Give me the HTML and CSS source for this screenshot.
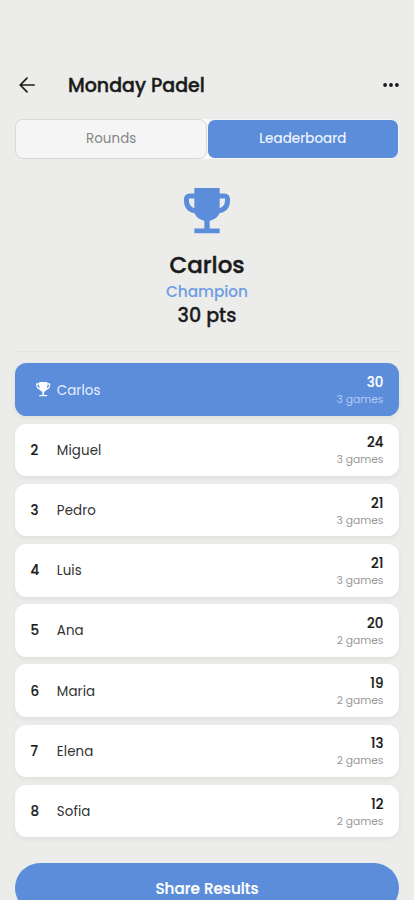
FILE: index.html
```html
<!DOCTYPE html>
<html lang="en">
<head>
<meta charset="utf-8">
<meta name="viewport" content="width=device-width, initial-scale=1">
<title>Monday Padel</title>
<link rel="stylesheet" href="styles.css">
</head>
<body>
<svg class="defs" width="0" height="0" aria-hidden="true">
  <symbol id="trophy" viewBox="0 0 138 136">
    <path fill-rule="evenodd" d="M31 0H107V16H122A16 16 0 0 1 138 32V38C138 58 126 73 107 75C101 87 93 95 77 98V121H107V136H31V121H61V98C45 95 37 87 31 75C12 73 0 58 0 38V32A16 16 0 0 1 16 16H31ZM31 31H15V38C15 49 22 57 31 60ZM107 31H123V38C123 49 116 57 107 60Z"/>
  </symbol>
  <symbol id="trophy-small" viewBox="0 0 43 44">
    <path fill-rule="evenodd" d="M11 0H32Q34 0 34 2V4H41Q43 4 43 6V9C43 17 37 22 31 24C29 27 26 29 24 29V39H31Q34 39 34 41V43H9V41Q9 39 12 39H19V29C17 29 14 27 12 24C6 22 0 17 0 9V6Q0 4 2 4H9V2Q9 0 11 0ZM9 8H4V10C4 14 7 18 11 19C10 16 9 12 9 8ZM34 8C34 12 33 16 32 19C36 18 39 14 39 10V8Z"/>
  </symbol>
</svg>
<header class="header">
  <svg class="back" viewBox="0 0 16 16"><path d="M8 1.2L1.2 8L8 14.8M1.2 8H15.2"/></svg>
  <h1 class="title"><span>Monday Padel</span></h1>
  <svg class="more" viewBox="0 0 16 4"><circle cx="2.1" cy="2" r="1.9"/><circle cx="8" cy="2" r="1.9"/><circle cx="13.9" cy="2" r="1.9"/></svg>
</header>
<nav class="tabs">
  <div class="tab">Rounds</div>
  <div class="tab active">Leaderboard</div>
</nav>
<section class="champion">
  <svg class="cup"><use href="#trophy"/></svg>
  <div class="winner">Carlos</div>
  <div class="label">Champion</div>
  <div class="points">30 pts</div>
</section>
<main class="list">
  <div class="row first"><span class="rank"><svg class="mini"><use href="#trophy-small"/></svg></span><span class="name">Carlos</span><div class="score"><b>30</b><small>3 games</small></div></div>
  <div class="row"><span class="rank">2</span><span class="name">Miguel</span><div class="score"><b>24</b><small>3 games</small></div></div>
  <div class="row"><span class="rank">3</span><span class="name">Pedro</span><div class="score"><b>21</b><small>3 games</small></div></div>
  <div class="row"><span class="rank">4</span><span class="name">Luis</span><div class="score"><b>21</b><small>3 games</small></div></div>
  <div class="row"><span class="rank">5</span><span class="name">Ana</span><div class="score"><b>20</b><small>2 games</small></div></div>
  <div class="row"><span class="rank">6</span><span class="name">Maria</span><div class="score"><b>19</b><small>2 games</small></div></div>
  <div class="row"><span class="rank">7</span><span class="name">Elena</span><div class="score"><b>13</b><small>2 games</small></div></div>
  <div class="row"><span class="rank">8</span><span class="name">Sofia</span><div class="score"><b>12</b><small>2 games</small></div></div>
</main>
<div class="share">Share Results</div>
</body>
</html>
```
FILE: styles.css
```css
* { box-sizing: border-box; }
html { height: 900px; overflow: hidden; }
body {
  margin: 0;
  height: 900px;
  overflow: hidden;
  padding: 65px 15.3px 0;
  background: #ececea;
  color: #1b1b1b;
  font-family: Poppins, Inter, "Open Sans", sans-serif;
}
.defs { position: absolute; }
.header { display: flex; align-items: center; height: 40px; padding: 0 0 0 4px; }
.back { width: 16px; height: 16px; fill: none; stroke: #1b1b1b; stroke-width: 1.7; stroke-linecap: round; stroke-linejoin: round; }
.title { flex: 1; margin: 0 0 0 32.7px; padding-top: 1px; font-size: 19px; line-height: 30px; font-weight: 500; -webkit-text-stroke: .4px; white-space: nowrap; }
.more { width: 16px; height: 4px; fill: #1b1b1b; }
.tabs { display: flex; height: 40px; margin-top: 14px; background: #fafafa; border-radius: 9px; }
.tab { flex: 1; display: flex; align-items: center; justify-content: center; border: 1px solid #d8d8d8; border-radius: 8px; background: #f5f5f5; color: #858585; font-size: 13.4px; letter-spacing: .1px; }
.tab.active { background: #5b8ddb; color: #f3f7fe; border-color: #f4f6fa; -webkit-text-stroke: .15px; }
.champion { display: flex; flex-direction: column; align-items: center; height: 193.4px; padding-top: 29.3px; border-bottom: 1px solid #e2e2e1; }
.cup { width: 46px; height: 45.5px; fill: #5b8ddb; }
.winner { margin-top: 14px; font-size: 23px; line-height: 34px; font-weight: 500; -webkit-text-stroke: .4px; }
.label { color: #6e9ce4; font-size: 15.3px; line-height: 20px; font-weight: 500; }
.points { font-size: 19.1px; line-height: 27px; font-weight: 500; -webkit-text-stroke: .3px; }
.list { display: flex; flex-direction: column; gap: 7.7px; margin-top: 11.1px; }
.row { display: flex; align-items: center; height: 52.5px; padding: 0 15.3px; border-radius: 11.5px; background: #fff; box-shadow: 0 2px 5px rgba(0, 0, 0, .06); }
.rank { width: 26.2px; padding-top: 2px; font-size: 13.4px; font-weight: 500; -webkit-text-stroke: .2px; }
.name { flex: 1; padding-top: 2px; color: #333; font-size: 13.4px; letter-spacing: .1px; }
.score { display: flex; flex-direction: column; align-items: flex-end; padding-top: 3px; }
.score b { font-size: 13.4px; line-height: 18px; font-weight: 500; -webkit-text-stroke: .2px; }
.score small { color: #999; font-size: 10.7px; line-height: 16px; }
.first { background: #5b8ddb; color: #fff; }
.first .rank { padding-top: 0; }
.first .name { color: #e9f0fc; }
.first .score small { color: #b4cbf0; }
.mini { display: block; width: 14.5px; height: 14.7px; margin-left: 5.7px; fill: #fff; }
.share { display: flex; align-items: center; justify-content: center; height: 50px; margin-top: 26px; border-radius: 25px; background: #5b8ddb; color: #fff; font-size: 15.2px; font-weight: 500; -webkit-text-stroke: .2px; }
```
